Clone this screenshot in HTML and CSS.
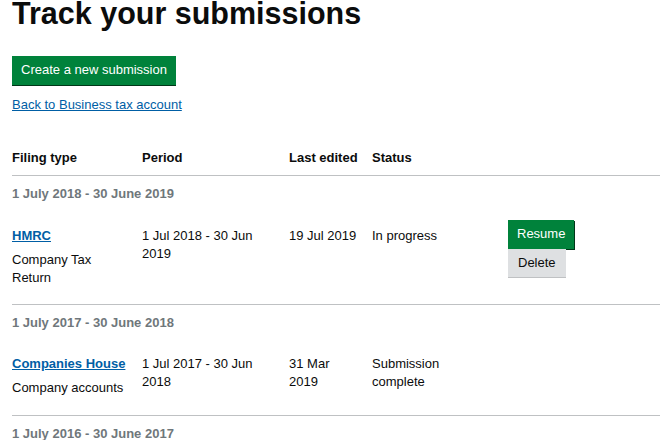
FILE: index.html
```html
<!DOCTYPE html>
<html>
<head>
<meta charset="utf-8">
<link rel="stylesheet" href="styles.css">
</head>
<body>
<main class="page">
  <h1 class="title">Track your submissions</h1>
  <div class="actions">
    <a class="btn btn-primary btn-create" href="#">Create a new submission</a>
  </div>
  <p class="back"><a class="link" href="#">Back to Business tax account</a></p>

  <div class="table">
    <div class="row head">
      <div class="cell">Filing type</div>
      <div class="cell">Period</div>
      <div class="cell">Last edited</div>
      <div class="cell">Status</div>
      <div class="cell"></div>
    </div>

    <div class="group">1 July 2018 - 30 June 2019</div>
    <div class="row item first">
      <div class="cell">
        <a class="link strong" href="#">HMRC</a>
        <p class="desc">Company Tax<br>Return</p>
      </div>
      <div class="cell">1 Jul 2018 - 30 Jun<br>2019</div>
      <div class="cell">19 Jul 2019</div>
      <div class="cell">In progress</div>
      <div class="cell btns">
        <a class="btn btn-primary btn-resume" href="#">Resume</a>
        <a class="btn btn-grey" href="#">Delete</a>
      </div>
    </div>

    <div class="group">1 July 2017 - 30 June 2018</div>
    <div class="row item second">
      <div class="cell">
        <a class="link strong" href="#">Companies House</a>
        <p class="desc">Company accounts</p>
      </div>
      <div class="cell">1 Jul 2017 - 30 Jun<br>2018</div>
      <div class="cell">31 Mar<br>2019</div>
      <div class="cell">Submission<br>complete</div>
      <div class="cell"></div>
    </div>

    <div class="group">1 July 2016 - 30 June 2017</div>
  </div>
</main>
</body>
</html>
```
FILE: styles.css
```css
html, body {
  margin: 0;
  padding: 0;
  background: #ffffff;
}
body {
  font-family: "Liberation Sans", Arial, sans-serif;
  color: #0b0c0c;
  font-size: 13px;
  line-height: 18px;
  overflow: hidden;
  height: 440px;
}
.page {
  padding-left: 12px;
}
.title {
  margin: -7px 0 0 0;
  font-size: 30.5px;
  line-height: 40px;
  font-weight: 700;
}
.actions {
  margin-top: 23px;
  display: flex;
}
.btn {
  display: inline-block;
  text-decoration: none;
  font-size: 13px;
  line-height: 18px;
  white-space: nowrap;
}
.btn-primary {
  background: #00823b;
  color: #ffffff;
  box-shadow: 0 1px 0 #003618;
}
.btn-create {
  padding: 5px 9px 6px;
}
.back {
  margin: 11px 0 0 0;
}
.link {
  color: #005ea5;
  text-decoration: underline;
}
.strong {
  font-weight: 700;
}
.table {
  margin-top: 35px;
}
.row {
  display: grid;
  grid-template-columns: 130px 147px 83px 136px 1fr;
  border-bottom: 1px solid #bfc1c3;
}
.head {
  font-weight: 700;
  padding-bottom: 8px;
}
.group {
  font-weight: 700;
  color: #6f777b;
  padding: 9px 0 0;
}
.item.first {
  padding: 24px 0 17px;
}
.item.second {
  padding: 23px 0 18px;
}
.desc {
  margin: 6px 0 0;
}
.btns {
  display: flex;
  flex-direction: column;
  align-items: flex-start;
  margin-top: -7px;
}
.btn-resume {
  padding: 5px 9px 6px;
  box-shadow: 1px 1px 0 #003618;
}
.btn-grey {
  background: #dee0e2;
  color: #0b0c0c;
  padding: 5px 10px;
  box-shadow: 0 1px 0 #bfc1c3;
}
```
